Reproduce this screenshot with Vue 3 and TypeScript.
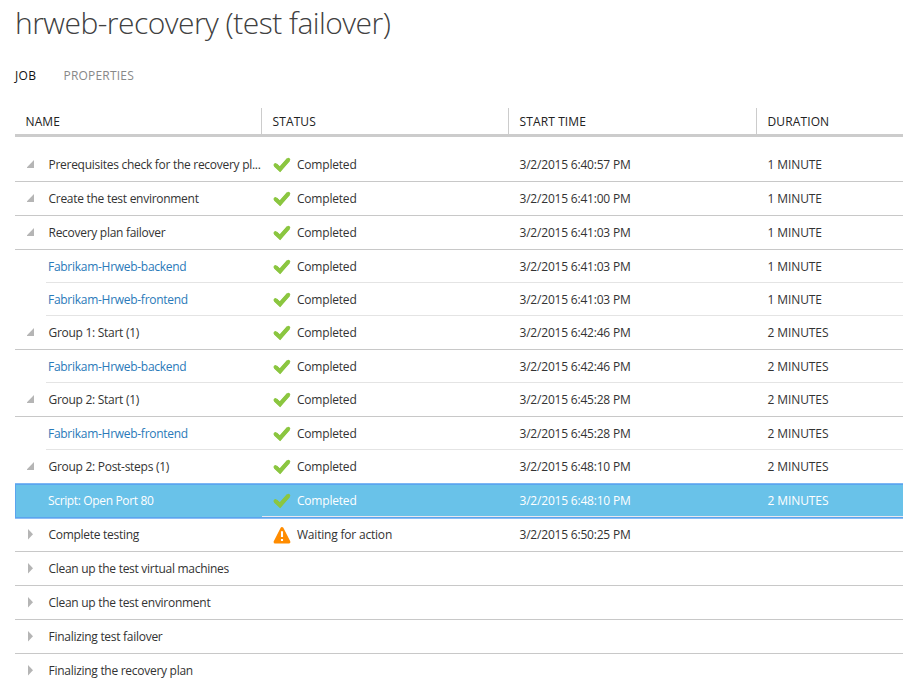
<script setup lang="ts">
type Kind = 'open' | 'closed' | 'child'

interface JobRow {
  name: string
  kind: Kind
  status?: 'Completed' | 'Waiting for action'
  start?: string
  duration?: string
  selected?: boolean
}

const columns: string[] = ['NAME', 'STATUS', 'START TIME', 'DURATION']

function done(name: string, kind: Kind, time: string, minutes: number, selected = false): JobRow {
  return {
    name,
    kind,
    status: 'Completed',
    start: `3/2/2015 ${time} PM`,
    duration: minutes === 1 ? '1 MINUTE' : `${minutes} MINUTES`,
    selected,
  }
}

const rows: JobRow[] = [
  done('Prerequisites check for the recovery pl...', 'open', '6:40:57', 1),
  done('Create the test environment', 'open', '6:41:00', 1),
  done('Recovery plan failover', 'open', '6:41:03', 1),
  done('Fabrikam-Hrweb-backend', 'child', '6:41:03', 1),
  done('Fabrikam-Hrweb-frontend', 'child', '6:41:03', 1),
  done('Group 1: Start (1)', 'open', '6:42:46', 2),
  done('Fabrikam-Hrweb-backend', 'child', '6:42:46', 2),
  done('Group 2: Start (1)', 'open', '6:45:28', 2),
  done('Fabrikam-Hrweb-frontend', 'child', '6:45:28', 2),
  done('Group 2: Post-steps (1)', 'open', '6:48:10', 2),
  done('Script: Open Port 80', 'child', '6:48:10', 2, true),
  { name: 'Complete testing', kind: 'closed', status: 'Waiting for action', start: '3/2/2015 6:50:25 PM' },
  { name: 'Clean up the test virtual machines', kind: 'closed' },
  { name: 'Clean up the test environment', kind: 'closed' },
  { name: 'Finalizing test failover', kind: 'closed' },
  { name: 'Finalizing the recovery plan', kind: 'closed' },
]
</script>

<template>
  <main class="page">
    <h1 class="title">hrweb-recovery (test failover)</h1>
    <nav class="tabs">
      <span class="tab active">JOB</span>
      <span class="tab">PROPERTIES</span>
    </nav>
    <section class="grid">
      <div class="head">
        <div v-for="c in columns" :key="c" class="th">{{ c }}</div>
      </div>
      <div class="body">
        <div v-for="(r, i) in rows" :key="i" class="row" :class="[r.kind, { selected: r.selected }]">
          <div class="cell name">
            <span class="toggle">
              <svg v-if="r.kind === 'open'" width="8" height="10" viewBox="0 0 8 10"><path d="M7 0V8H-.6Z" fill="#b5b5b5" /></svg>
              <svg v-else-if="r.kind === 'closed'" width="8" height="12" viewBox="0 0 8 12"><path d="M1 0L6 5.3L1 10.6Z" fill="#b5b5b5" /></svg>
            </span>
            <span class="label">{{ r.name }}</span>
          </div>
          <div class="cell status">
            <svg v-if="r.status === 'Completed'" class="icon" width="18" height="18" viewBox="0 0 18 18">
              <path d="M2.4 9L7 13.2L15.4 3.6" fill="none" stroke="#8bc640" stroke-width="4.2" stroke-linejoin="miter" stroke-linecap="butt" />
              <path d="M2.4 9L7 13.2L15.4 3.6" fill="none" stroke="#8bc640" stroke-width="3.6" stroke-linejoin="miter" stroke-linecap="round" />
            </svg>
            <svg v-else-if="r.status" class="icon" width="18" height="18" viewBox="0 0 18 18">
              <path d="M9 2.5L15.9 15.9H2.1Z" fill="#ff8c00" stroke="#ff8c00" stroke-width="3" stroke-linejoin="round" />
              <path d="M9 5.3V11M9 12.9V15.1" stroke="#fff" stroke-width="2.1" />
            </svg>
            <span v-if="r.status">{{ r.status }}</span>
          </div>
          <div class="cell start">{{ r.start }}</div>
          <div class="cell duration">{{ r.duration }}</div>
        </div>
      </div>
    </section>
  </main>
</template>

<style>
body {
  background: #fff;
  overflow: hidden;
}
</style>

<style scoped>
.page {
  box-sizing: border-box;
  width: 903px;
  height: 689px;
  overflow: hidden;
  padding-left: 15px;
  font-family: 'Open Sans', 'Noto Sans', sans-serif;
  font-size: 12px;
  color: #333;
}
.title {
  margin: 0;
  height: 48px;
  line-height: 46px;
  font-size: 30px;
  font-weight: 300;
  letter-spacing: -0.53px;
  color: #404040;
  white-space: nowrap;
}
.tabs {
  display: flex;
  gap: 27px;
  height: 60px;
  line-height: 56px;
  letter-spacing: 0.2px;
}
.tab {
  color: #888;
}
.tab.active {
  color: #111;
  letter-spacing: 0.4px;
}
.head,
.row {
  display: grid;
  grid-template-columns: 247px 247px 248px 1fr;
}
.head {
  height: 26px;
  border-bottom: 3px solid #ccc;
  letter-spacing: 0.12px;
}
.th {
  padding-left: 10.5px;
  line-height: 28px;
  color: #222;
  border-left: 1px solid #ccc;
  margin-left: -1px;
}
.th:first-child {
  border-left: 0;
  margin-left: 0;
}
.body {
  padding-top: 11px;
}
.row {
  position: relative;
  height: 33px;
  line-height: 33px;
  border-bottom: 1px solid #c8c8c8;
}
.row.child {
  height: 32px;
  border-bottom: 0;
  padding-bottom: 1px;
}
.row.child::after {
  content: '';
  position: absolute;
  left: 31px;
  right: 0;
  bottom: 0;
  height: 1px;
  background: #e4e4e4;
}
.row.child.selected {
  height: 33px;
  background: #69c2e9;
  color: #fff;
  font-weight: 500;
  box-shadow: 0 -1px 0 #7db7f4, 0 1px 0 #8dbdf5, inset 0 0 0 1px #5aa5ee;
  margin-right: -4px;
}
.row.child.selected::after {
  left: 247px;
  bottom: 1px;
  background: #e8e8ef;
}
.row:last-child {
  border-bottom: 0;
}
.cell {
  white-space: nowrap;
  min-width: 0;
}
.name {
  display: flex;
  letter-spacing: -0.28px;
}
.toggle {
  width: 33.5px;
  flex: none;
  display: flex;
  align-items: center;
  padding-left: 12px;
  box-sizing: border-box;
}
.child .toggle {
  width: 33px;
}
.child .label {
  color: #2a7ab9;
}
.selected .label {
  color: #fff;
  letter-spacing: -0.35px;
}
.status {
  display: flex;
  align-items: center;
  padding-left: 10.6px;
  letter-spacing: -0.2px;
}
.icon {
  flex: none;
  margin-right: 6.4px;
}
.start,
.duration {
  padding-left: 10.5px;
}
.start {
  letter-spacing: -0.2px;
}
.duration {
  letter-spacing: -0.1px;
}
</style>
